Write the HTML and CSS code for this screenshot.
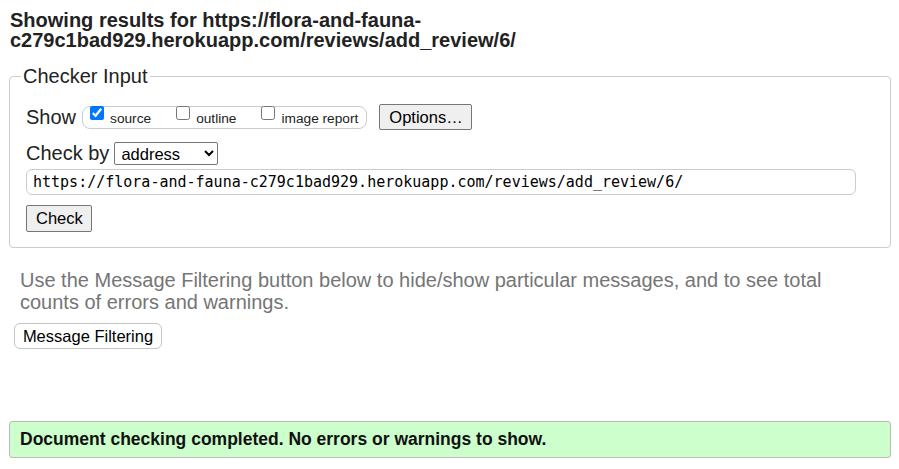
FILE: index.html
```html
<!DOCTYPE html>
<html lang="en">
<head>
<meta charset="utf-8">
<title>Nu Html Checker</title>
<link rel="stylesheet" href="styles.css">
</head>
<body>
<div class="page">
  <h2 class="results-title">Showing results for https://flora-and-fauna-c279c1bad929.herokuapp.com/reviews/add_review/6/</h2>
  <fieldset class="checker">
    <legend class="legend">Checker Input</legend>
    <div class="row show-row">
      <span class="label">Show</span>
      <span class="pill">
        <label class="opt"><input type="checkbox" checked><span>source</span></label>
        <label class="opt"><input type="checkbox"><span>outline</span></label>
        <label class="opt"><input type="checkbox"><span>image report</span></label>
      </span>
      <button class="btn options">Options…</button>
    </div>
    <div class="row by-row">
      <span class="label by-label">Check by</span>
      <select class="select"><option>address</option></select>
    </div>
    <input class="url" type="text" value="https://flora-and-fauna-c279c1bad929.herokuapp.com/reviews/add_review/6/">
    <div class="row">
      <button class="btn check">Check</button>
    </div>
  </fieldset>
  <p class="hint">Use the Message Filtering button below to hide/show particular messages, and to see total counts of errors and warnings.</p>
  <button class="filter">Message Filtering</button>
  <div class="success">Document checking completed. No errors or warnings to show.</div>
</div>
</body>
</html>
```
FILE: styles.css
```css
html, body {
  margin: 0;
  padding: 0;
  background: #fff;
}
body {
  font-family: "Liberation Sans", Arial, sans-serif;
  color: #000;
}
.page {
  padding: 10px 8px 0 9px;
}
.results-title {
  font-size: 20px;
  font-weight: bold;
  line-height: 20px;
  margin: 0 0 0 1px;
  max-width: 600px;
  color: #222;
}
.checker {
  margin: 15px 0 0 0;
  border: 1px solid #ccc;
  border-radius: 4px;
  padding: 16px 16px 15px 16px;
}
.legend {
  font-size: 20px;
  line-height: 23px;
  padding: 0 2px;
  margin-left: -5px;
  color: #222;
}
.row {
  display: flex;
  align-items: center;
}
.show-row {
  height: 26px;
}
.label {
  font-size: 20px;
  line-height: 23px;
  margin-right: 6px;
  color: #222;
}
.pill {
  display: inline-flex;
  align-items: center;
  box-sizing: border-box;
  border: 1px solid #ccc;
  border-radius: 8px;
  padding: 0 8px 0 7px;
  height: 23px;
  gap: 25px;
}
.opt {
  font-size: 13.7px;
  line-height: 16px;
  display: inline-flex;
  align-items: flex-start;
  gap: 6px;
  color: #222;
}
.opt input {
  margin: 0;
  width: 14px;
  height: 14px;
  position: relative;
  top: -3px;
  accent-color: #0075ff;
}
.opt span {
  position: relative;
  top: 2px;
}
.btn {
  font-family: "Liberation Sans", Arial, sans-serif;
  font-size: 16.5px;
  background: #efefef;
  border: 1px solid #767676;
  border-radius: 2px;
  color: #000;
  padding: 0 9px;
  box-sizing: border-box;
}
.options {
  margin-left: 12px;
  height: 26px;
  width: 93px;
}
.by-row {
  margin-top: 12px;
  height: 23px;
}
.by-label {
  margin-right: 5px;
}
.select {
  font-family: "Liberation Sans", Arial, sans-serif;
  font-size: 16.5px;
  width: 104px;
  height: 23px;
  box-sizing: border-box;
  border: 1px solid #767676;
  border-radius: 2px;
  background: #fff;
  color: #000;
  padding: 0 2px;
}
.url {
  display: block;
  margin: 4px 0 0 0;
  width: 830px;
  height: 26px;
  box-sizing: border-box;
  border: 1px solid #ccc;
  border-radius: 6px;
  padding: 0 6px;
  font-family: "DejaVu Sans Mono", Consolas, monospace;
  font-size: 15px;
  color: #000;
}
.check {
  margin-top: 10px;
  height: 27px;
  width: 66px;
}
.hint {
  margin: 21px 0 0 11px;
  font-size: 20px;
  line-height: 22px;
  color: #757575;
  max-width: 840px;
}
.filter {
  display: block;
  margin: 10px 0 0 5px;
  font-family: "Liberation Sans", Arial, sans-serif;
  font-size: 16.5px;
  height: 26px;
  width: 148px;
  padding: 0;
  background: #fff;
  border: 1px solid #c4c4c4;
  border-radius: 6px;
  color: #000;
}
.success {
  margin-top: 72px;
  box-sizing: border-box;
  background: #ccffcc;
  border: 1px solid #bbb;
  border-radius: 3px;
  padding: 0 10px;
  height: 37px;
  display: flex;
  align-items: center;
  font-size: 17.5px;
  font-weight: bold;
  color: #111;
}
```
